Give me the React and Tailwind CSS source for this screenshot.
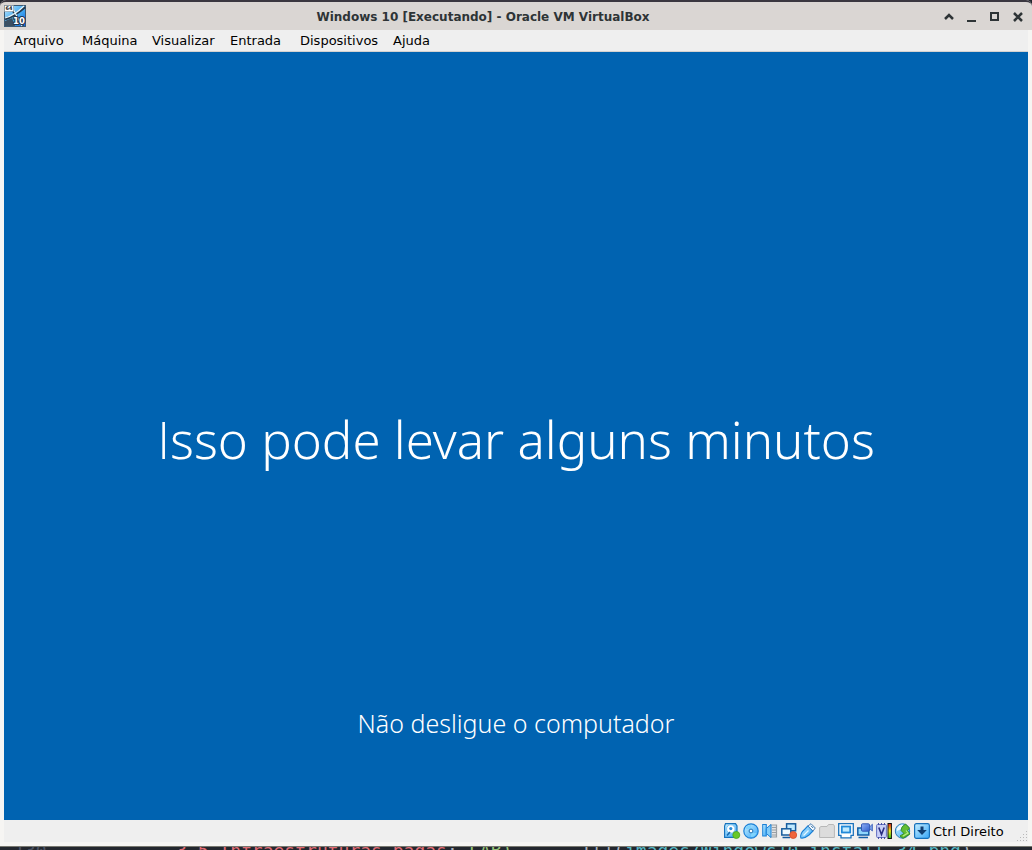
import React from 'react';

const menus = [
  ['Arquivo', 'w-[68px]'],
  ['Máquina', 'w-[70px]'],
  ['Visualizar', 'w-[78px]'],
  ['Entrada', 'w-[70px]'],
  ['Dispositivos', 'w-[93px]'],
  ['Ajuda', 'w-[60px]'],
];

function Gradients() {
  return (
    <svg className="absolute size-0" aria-hidden="true">
      <defs>
        <linearGradient id="sky" x1="0" y1="0" x2="1" y2="1">
          <stop offset="0" stopColor="#c8efff" />
          <stop offset="1" stopColor="#35a5f8" />
        </linearGradient>
        <linearGradient id="deep" x1="0" y1="0" x2="1" y2="1">
          <stop offset="0" stopColor="#8fb0f5" />
          <stop offset="1" stopColor="#2f5fce" />
        </linearGradient>
        <linearGradient id="logo" x1="0" y1="0" x2="1" y2="1">
          <stop offset="0" stopColor="#bfe6fb" />
          <stop offset="0.5" stopColor="#4ab0f4" />
          <stop offset="1" stopColor="#0a62dc" />
        </linearGradient>
        <linearGradient id="meter" x1="0" y1="0" x2="0" y2="1">
          <stop offset="0" stopColor="#e8201c" />
          <stop offset="0.5" stopColor="#f7ef1c" />
          <stop offset="1" stopColor="#2ec41c" />
        </linearGradient>
      </defs>
    </svg>
  );
}

function Icon({ children }) {
  return (
    <svg className="size-4 overflow-visible" viewBox="0 0 16 16" aria-hidden="true">
      {children}
    </svg>
  );
}

function VmLogo() {
  return (
    <svg className="size-[22px]" viewBox="0 0 22 22" aria-hidden="true">
      <rect x="0.5" y="0.5" width="21" height="21" fill="url(#logo)" stroke="#3c5a74" />
      <path d="M1 16L8 13L11 21H1Z" fill="#3b4f63" />
      <path d="M8 3C10 8 13 13 19 21M1 14C8 12 14 8 21 2" fill="none" stroke="#22384c" strokeWidth="2.6" />
      <path d="M9 3C11 8 13 12 18 21M1 13C8 11 14 7 20 1" fill="none" stroke="#e6f7ff" strokeWidth="1.2" />
      <rect x="0.5" y="0.5" width="9" height="6" fill="#fff" stroke="#8a949c" strokeWidth="0.6" />
      <text x="1.5" y="5.4" fontSize="5" fontWeight="700" fontFamily="DejaVu Sans" fill="#222">64</text>
      <text x="9" y="19" fontSize="8.5" fontWeight="700" fontFamily="DejaVu Sans" fill="#fff" stroke="#22364c" strokeWidth="2" paintOrder="stroke">10</text>
    </svg>
  );
}

const devices = [
  ['Discos rígidos', (
    <>
      <path d="M1.5 0.6H11.5L13 3V14.4H0.6V3Z" fill="url(#sky)" stroke="#1673bd" strokeWidth="1.2" />
      <circle cx="6.8" cy="6" r="4.2" fill="#fff" stroke="#6db9ec" strokeWidth="0.8" />
      <circle cx="6.8" cy="5.6" r="1.6" fill="#2c8bd8" />
      <path d="M3 12.5L6 9" stroke="#1769af" strokeWidth="1.6" />
      <circle cx="12.3" cy="12" r="3.5" fill="#69c829" stroke="#4aa51c" strokeWidth="0.8" />
    </>
  )],
  ['Discos ópticos', (
    <>
      <circle cx="8" cy="8" r="7.2" fill="url(#sky)" stroke="#1b80d6" strokeWidth="1.2" />
      <path d="M2.5 6A6 6 0 0 1 8 2V6ZM13.5 10A6 6 0 0 1 8 14V10Z" fill="#7fd3fc" />
      <circle cx="8" cy="8" r="1.9" fill="#fff" stroke="#1b70b4" strokeWidth="1" />
    </>
  )],
  ['Áudio', (
    <>
      <path d="M8 2H14.5V14H8M10 4.5H15M10 7H15M10 9.5H15M10 12H15" fill="#e2e2e2" stroke="#9a9fa3" strokeWidth="1.2" />
      <rect x="0.7" y="1.5" width="3.6" height="11.5" fill="url(#sky)" stroke="#1b80d6" />
      <path d="M4.3 5.5L9 1.5V14.5L4.3 10.5Z" fill="#80cbf9" stroke="#1b80d6" />
    </>
  )],
  ['Rede', (
    <>
      <rect x="5.6" y="0.8" width="9" height="7" fill="#bfe9ff" stroke="#155b9d" strokeWidth="1.5" />
      <rect x="0.8" y="5.8" width="9" height="6.2" fill="#eefaff" stroke="#155b9d" strokeWidth="1.5" />
      <path d="M1.5 14.5H9" stroke="#155b9d" strokeWidth="1.5" />
      <circle cx="12.2" cy="12" r="3.5" fill="#f0643b" stroke="#d24a28" strokeWidth="0.8" />
    </>
  )],
  ['USB', (
    <>
      <path d="M0.8 15C0 11 2 8.5 5 6L8 2.8L13 8L9 12C6 14.5 4 15.5 0.8 15Z" fill="url(#sky)" stroke="#1b80d6" strokeWidth="1.1" />
      <path d="M8 3L11 0.7L15.3 5L13 8Z" fill="#f2f8ff" stroke="#4a7fb5" />
      <path d="M3.5 12.5L8.5 7.5" fill="none" stroke="#e8f8ff" strokeWidth="1.2" />
      <path d="M11 2.8L13.2 5" stroke="#326d9d" />
    </>
  )],
  ['Pastas compartilhadas', (
    <path d="M0.6 14.5V4.5L2 3.5H8L9.5 1.5H14.5L15.4 3V14.5Z" fill="#dcdcdc" stroke="#b8b8b8" />
  )],
  ['Monitor', (
    <>
      <path d="M0.7 0.7H15.3V12.3H13V14.8H3V12.3H0.7Z" fill="#fff" stroke="#1b72bb" strokeWidth="1.3" />
      <rect x="3.8" y="3.5" width="8.4" height="6" fill="#bfe9ff" stroke="#2289d8" strokeWidth="1.8" />
    </>
  )],
  ['Gravação', (
    <>
      <rect x="0.8" y="5" width="11" height="7" fill="#8fd6fb" stroke="#125fa7" strokeWidth="1.5" />
      <path d="M1.5 14.5H11" stroke="#125fa7" strokeWidth="1.5" />
      <rect x="4.5" y="0.8" width="8" height="7.4" rx="1" fill="url(#deep)" stroke="#3459b5" />
      <path d="M12.5 4L15.4 1.2V8L12.5 5.5Z" fill="#7b9ee8" stroke="#3459b5" strokeWidth="0.8" />
    </>
  )],
  ['Virtualização', (
    <>
      <rect x="0.6" y="1.5" width="9.8" height="13" rx="1" fill="#c9d0f7" stroke="#6470c0" />
      <path d="M2.5 0V2M5.5 0V2M8.5 0V2M2.5 14V16M5.5 14V16M8.5 14V16" stroke="#4652a4" />
      <path d="M2.8 4.5L5.5 11.5L8.2 4.5" fill="none" stroke="#292e82" strokeWidth="1.6" />
      <rect x="12" y="0.5" width="3.4" height="15" fill="url(#meter)" stroke="#111" />
    </>
  )],
  ['Integração do mouse', (
    <>
      <circle cx="7.5" cy="8" r="7.2" fill="url(#sky)" stroke="#2879b7" />
      <path d="M7 1.5C3 3 1.5 5 2 8L6 6L8 2Z" fill="#eefaff" />
      <path d="M7 4L10.5 1L14.5 5L12.5 7.5L15 11L8 15.3L5 13L9 10.5L6 7.5Z" fill="#62bd33" stroke="#2f8a1d" strokeWidth="0.9" />
      <path d="M11 7.5L13 10L8 13" fill="none" stroke="#b6ec86" strokeWidth="1.2" />
    </>
  )],
  ['Captura do teclado', (
    <>
      <rect x="0.6" y="0.6" width="14.8" height="14.8" rx="1.8" fill="url(#sky)" stroke="#1670bb" strokeWidth="1.2" />
      <path d="M6.5 3.5H9.5V7H12.8L8 12L3.2 7H6.5Z" fill="#113f72" />
    </>
  )],
];

const controls = [
  ['Enrolar', <path d="M1 7L5 3L9 7" fill="none" strokeWidth="2.5" />],
  ['Minimizar', <path d="M0 9H9" fill="none" />],
  ['Maximizar', <rect x="1" y="1" width="7" height="7" fill="none" />],
  ['Fechar', <path d="M1 1L9 9M9 1L1 9" fill="none" strokeWidth="2.5" />],
];

export default function App() {
  return (
    <div className="flex h-screen flex-col overflow-hidden bg-[#23272e] font-['DejaVu_Sans',sans-serif] text-[13px] text-black">
      <Gradients />
      <main className="flex min-h-0 flex-1 flex-col rounded-t-md border-b border-[#77776f] bg-[#f6f5f3]">
        <header className="flex h-[30px] shrink-0 items-center rounded-t-md border-t-2 border-[#3a3740] bg-[#dad6d3] pl-1 pr-[7px]">
          <div className="flex w-[27px]"><VmLogo /></div>
          <h1 className="flex-1 pt-0.5 text-center text-[12px] font-bold text-[#2e3436]">Windows 10 [Executando] - Oracle VM VirtualBox</h1>
          <div className="flex w-[90px] justify-end gap-[9px] pt-0.5">
            {controls.map(([label, shape]) => (
              <button key={label} aria-label={label} className="flex size-[14px] items-center justify-center">
                <svg className="size-[10px] overflow-visible" viewBox="0 0 10 10" stroke="#2e3436" strokeWidth="2">{shape}</svg>
              </button>
            ))}
          </div>
        </header>
        <div className="mx-1 mb-1 flex min-h-0 flex-1 flex-col bg-[#efefef]">
          <nav className="flex h-[22px] shrink-0 items-center border-b border-[#d4d2d0] pl-[10px]">
            {menus.map(([label, width]) => (
              <button key={label} className={`${width} text-left`}>{label}</button>
            ))}
          </nav>
          <section className="flex min-h-0 flex-1 flex-col items-center bg-[#0063b1] text-center font-['Noto_Sans','Open_Sans',sans-serif] font-light text-white">
            <div className="flex flex-1 items-end pt-4">
              <p className="text-[51px] leading-[76px]"><span className="font-['Open_Sans',sans-serif]">I</span>sso pode levar alguns minutos</p>
            </div>
            <div className="flex h-[343px] items-end pb-[79px]">
              <p className="text-[25px] leading-[36px]">Não desligue o computador</p>
            </div>
          </section>
          <footer className="flex h-[22px] shrink-0 items-center justify-end">
            <div className="flex gap-[3px]">
              {devices.map(([label, art]) => (
                <button key={label} aria-label={label}><Icon>{art}</Icon></button>
              ))}
            </div>
            <span className="ml-[3px] w-[83px] pt-0.5">Ctrl Direito</span>
            <svg className="size-3 self-end" viewBox="0 0 12 12" fill="#b9b9b9" aria-hidden="true">
              <path d="M10 1h1v1h-1zM7 4h1v1h-1zM10 4h1v1h-1zM4 7h1v1h-1zM7 7h1v1h-1zM10 7h1v1h-1zM1 10h1v1h-1zM4 10h1v1h-1zM7 10h1v1h-1zM10 10h1v1h-1z" />
            </svg>
          </footer>
        </div>
      </main>
      <div className="flex h-[3px] shrink-0 overflow-hidden whitespace-pre pl-[14px] font-['DejaVu_Sans_Mono',monospace] text-[18px] leading-[8px]">
        <span className="w-[162px] text-[#4b5263]">130</span>
        <span className="w-[271px] text-[#e06c75]">3.5 Infraestruturas pagas</span>
        <span className="w-[22px] text-[#abb2bf]">:</span>
        <span className="w-[112px] text-[#98c379]">LAB)</span>
        <span className="w-[44px] text-[#abb2bf]">![](</span>
        <span className="text-[#56b6c2]">images/Windows10_install_34.png</span>
        <span className="text-[#abb2bf]">)</span>
      </div>
    </div>
  );
}
